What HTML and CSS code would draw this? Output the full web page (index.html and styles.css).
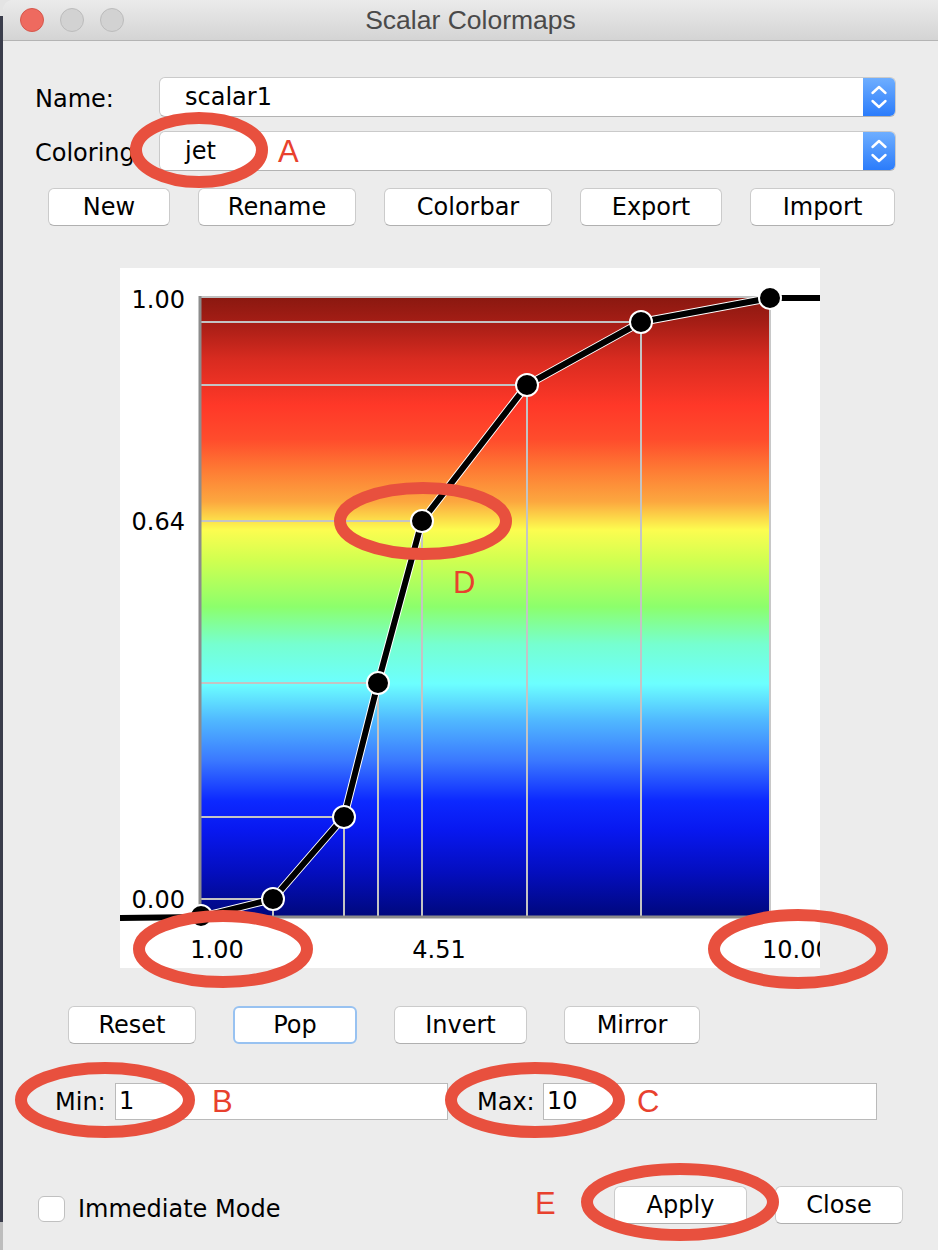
FILE: index.html
```html
<!DOCTYPE html>
<html>
<head>
<meta charset="utf-8">
<title>Scalar Colormaps</title>
<link rel="stylesheet" href="styles.css">
</head>
<body>
<div class="screen">
  <div class="edge"></div>
  <div class="window">
    <div class="titlebar">
      <div class="lights">
        <span class="light red"></span>
        <span class="light"></span>
        <span class="light"></span>
      </div>
      <div class="title">Scalar Colormaps</div>
      <div></div>
    </div>
    <div class="content">
      <div class="form-row">
        <span class="label">Name:</span>
        <div class="combo">
          <span class="combo-text">scalar1</span>
          <span class="combo-arrow">
            <svg width="32" height="38" viewBox="0 0 32 38"><path d="M9.5 15 L16 9 L22.5 15 M9.5 23 L16 29 L22.5 23" fill="none" stroke="#fff" stroke-width="2.4" stroke-linecap="round" stroke-linejoin="round"/></svg>
          </span>
        </div>
      </div>
      <div class="form-row">
        <span class="label">Coloring:</span>
        <div class="combo">
          <span class="combo-text">jet</span>
          <span class="combo-arrow">
            <svg width="32" height="38" viewBox="0 0 32 38"><path d="M9.5 15 L16 9 L22.5 15 M9.5 23 L16 29 L22.5 23" fill="none" stroke="#fff" stroke-width="2.4" stroke-linecap="round" stroke-linejoin="round"/></svg>
          </span>
        </div>
      </div>
      <div class="btn-row top-btns">
        <button class="btn w-new">New</button>
        <button class="btn w-rename">Rename</button>
        <button class="btn w-colorbar">Colorbar</button>
        <button class="btn w-export">Export</button>
        <button class="btn w-import">Import</button>
      </div>
      <div class="chart-panel">
        <svg width="700" height="700" viewBox="0 0 700 700">
          <defs>
            <linearGradient id="jet" x1="0" y1="0" x2="0" y2="1">
              <stop offset="0" stop-color="#8a1810"/>
              <stop offset="0.04" stop-color="#a41d15"/>
              <stop offset="0.10" stop-color="#d82b20"/>
              <stop offset="0.175" stop-color="#ff3828"/>
              <stop offset="0.23" stop-color="#ff4c2c"/>
              <stop offset="0.28" stop-color="#fe7c34"/>
              <stop offset="0.33" stop-color="#fca73f"/>
              <stop offset="0.376" stop-color="#fcfd50"/>
              <stop offset="0.425" stop-color="#d0ff50"/>
              <stop offset="0.50" stop-color="#8cff6c"/>
              <stop offset="0.56" stop-color="#76ffd0"/>
              <stop offset="0.624" stop-color="#6cffff"/>
              <stop offset="0.683" stop-color="#50b8ff"/>
              <stop offset="0.748" stop-color="#3a78ff"/>
              <stop offset="0.813" stop-color="#0c28ff"/>
              <stop offset="0.86" stop-color="#0818f0"/>
              <stop offset="0.926" stop-color="#040ec0"/>
              <stop offset="1" stop-color="#00087c"/>
            </linearGradient>
          </defs>
          <rect x="80" y="29" width="570" height="620" fill="url(#jet)"/>
          <g stroke="#c4c4c4" stroke-width="2">
            <line x1="80" y1="631" x2="153" y2="631"/>
            <line x1="80" y1="549" x2="224" y2="549"/>
            <line x1="80" y1="415" x2="258" y2="415"/>
            <line x1="80" y1="253" x2="302" y2="253"/>
            <line x1="80" y1="117" x2="407" y2="117"/>
            <line x1="80" y1="54" x2="521" y2="54"/>
            <line x1="153" y1="631" x2="153" y2="648"/>
            <line x1="224" y1="549" x2="224" y2="648"/>
            <line x1="258" y1="415" x2="258" y2="648"/>
            <line x1="302" y1="253" x2="302" y2="648"/>
            <line x1="407" y1="117" x2="407" y2="648"/>
            <line x1="521" y1="54" x2="521" y2="648"/>
          </g>
          <line x1="80" y1="29" x2="650" y2="29" stroke="#c0c0c0" stroke-width="2"/>
          <line x1="650" y1="29" x2="650" y2="650" stroke="#c8c8c8" stroke-width="2"/>
          <line x1="80" y1="28" x2="80" y2="650" stroke="#8c8c8c" stroke-width="3"/>
          <line x1="80" y1="649" x2="651" y2="649" stroke="#8c8c8c" stroke-width="3"/>
          <polyline points="81,649 153,631 224,549 258,415 302,253 407,117 521,54 650,30" fill="none" stroke="#fff" stroke-width="8" stroke-linejoin="round"/>
          <polyline points="0,650 81,649 153,631 224,549 258,415 302,253 407,117 521,54 650,30 700,30" fill="none" stroke="#000" stroke-width="6" stroke-linejoin="round"/>
          <g fill="#000" stroke="#fff" stroke-width="2">
            <circle cx="81" cy="648" r="11"/>
            <circle cx="153" cy="631" r="11"/>
            <circle cx="224" cy="549" r="11"/>
            <circle cx="258" cy="415" r="11"/>
            <circle cx="302" cy="253" r="11"/>
            <circle cx="407" cy="117" r="11"/>
            <circle cx="521" cy="54" r="11"/>
            <circle cx="650" cy="30" r="11"/>
          </g>
          <g class="axis-label">
            <text x="65" y="40" text-anchor="end">1.00</text>
            <text x="65" y="262" text-anchor="end">0.64</text>
            <text x="65" y="640" text-anchor="end">0.00</text>
            <text x="97" y="690" text-anchor="middle">1.00</text>
            <text x="319" y="690" text-anchor="middle">4.51</text>
            <text x="642" y="690">10.00</text>
          </g>
        </svg>
      </div>
      <div class="btn-row mid-btns">
        <button class="btn w-reset">Reset</button>
        <button class="btn btn-focus w-pop">Pop</button>
        <button class="btn w-invert">Invert</button>
        <button class="btn w-mirror">Mirror</button>
      </div>
      <div class="range-row">
        <span class="range-label min-label">Min:</span>
        <div class="field">1</div>
        <span class="range-label max-label">Max:</span>
        <div class="field field-max">10</div>
      </div>
      <div class="bottom-row">
        <span class="checkbox"></span>
        <span class="check-text">Immediate Mode</span>
        <button class="btn w-apply">Apply</button>
        <button class="btn w-close">Close</button>
      </div>
    </div>
  </div>
  <svg class="annotations" width="938" height="1250" viewBox="0 0 938 1250">
    <g fill="none" stroke="#e8503e" stroke-width="12">
      <ellipse cx="199" cy="150" rx="63" ry="32"/>
      <ellipse cx="423" cy="521" rx="83" ry="33"/>
      <ellipse cx="223" cy="949" rx="84" ry="33"/>
      <ellipse cx="798" cy="949" rx="84" ry="34"/>
      <ellipse cx="105" cy="1100" rx="84" ry="32"/>
      <ellipse cx="535" cy="1100" rx="84" ry="32"/>
      <ellipse cx="680" cy="1202" rx="93" ry="33"/>
    </g>
    <g class="note-letter">
      <text x="278" y="162">A</text>
      <text x="212" y="1112">B</text>
      <text x="637" y="1112">C</text>
      <text x="453" y="593">D</text>
      <text x="535" y="1214">E</text>
    </g>
  </svg>
</div>
</body>
</html>
```
FILE: styles.css
```css
html, body {
  margin: 0;
  padding: 0;
}

body {
  width: 938px;
  height: 1250px;
  overflow: hidden;
  background: #ececec;
  font-family: "DejaVu Sans", "Noto Sans", sans-serif;
  color: #000;
}

.screen {
  position: relative;
  display: flex;
  width: 938px;
  height: 1250px;
  background: #e4e4e4;
}

.edge {
  width: 3px;
  flex: none;
  background: linear-gradient(#e4e4e4 0, #e4e4e4 16px, #3a3d4b 16px, #3a3d4b 1222px, #bdbdbd 1222px);
}

.window {
  flex: 1;
  display: flex;
  flex-direction: column;
  background: #ececec;
  border-top-left-radius: 10px;
}

.titlebar {
  height: 40px;
  flex: none;
  display: grid;
  grid-template-columns: 1fr auto 1fr;
  align-items: center;
  background: linear-gradient(#ebebeb, #d4d4d4);
  border-bottom: 1px solid #b4b4b4;
  border-top-left-radius: 10px;
}

.lights {
  display: flex;
  gap: 16px;
  padding-left: 17px;
}

.light {
  width: 24px;
  height: 24px;
  box-sizing: border-box;
  border-radius: 50%;
  background: #d2d2d2;
  border: 1px solid #bcbcbc;
}

.light.red {
  background: #ee6a5f;
  border-color: #d6574c;
}

.title {
  font-family: "Liberation Sans", Arial, sans-serif;
  font-size: 26.5px;
  color: #4a4a4a;
}

.content {
  display: flex;
  flex-direction: column;
  padding: 36px 0 0 32px;
}

.form-row {
  display: flex;
  align-items: center;
  height: 40px;
}

.form-row + .form-row {
  margin-top: 14px;
}

.label {
  width: 124px;
  font-size: 24px;
  padding-top: 3px;
}

.combo {
  width: 737px;
  height: 40px;
  box-sizing: border-box;
  display: flex;
  background: #fff;
  border: 1px solid #cacaca;
  border-bottom-color: #b3b3b3;
  border-radius: 6px;
  overflow: hidden;
}

.combo-text {
  flex: 1;
  padding-left: 25px;
  font-size: 24px;
  line-height: 38px;
}

.combo-arrow {
  width: 32px;
  display: flex;
  align-items: center;
  justify-content: center;
  background: linear-gradient(#6eaeff, #2b7cfb);
}

.btn-row {
  display: flex;
}

.btn {
  height: 38px;
  box-sizing: border-box;
  padding: 0;
  background: #fff;
  border: 1px solid #cbcbcb;
  border-bottom-color: #b0b0b0;
  border-radius: 6px;
  font-family: "DejaVu Sans", "Noto Sans", sans-serif;
  font-size: 24px;
  color: #000;
}

.btn-focus {
  border: 2px solid #98c2f1;
}

.top-btns {
  margin-top: 17px;
  margin-left: 13px;
  gap: 28px;
}

.w-new { width: 122px; }
.w-rename { width: 158px; }
.w-colorbar { width: 168px; }
.w-export { width: 142px; }
.w-import { width: 145px; }

.chart-panel {
  margin-top: 42px;
  margin-left: 85px;
  width: 700px;
  height: 700px;
  background: #fff;
}

.chart-panel svg {
  display: block;
}

.axis-label text {
  font-family: "DejaVu Sans", sans-serif;
  font-size: 24px;
  fill: #000;
}

.mid-btns {
  margin-top: 38px;
  margin-left: 33px;
  gap: 37px;
}

.w-reset { width: 128px; }
.w-pop { width: 124px; }
.w-invert { width: 133px; }
.w-mirror { width: 136px; }

.range-row {
  display: flex;
  align-items: center;
  height: 37px;
  margin-top: 39px;
  margin-left: 20px;
}

.range-label {
  font-size: 24px;
}

.min-label {
  width: 60px;
}

.max-label {
  width: 66px;
  margin-left: 29px;
}

.field {
  width: 333px;
  height: 37px;
  box-sizing: border-box;
  background: #fff;
  border: 1px solid #bababa;
  font-size: 24px;
  line-height: 35px;
  padding-left: 3px;
}

.field-max {
  width: 334px;
}

.bottom-row {
  display: flex;
  align-items: center;
  height: 38px;
  margin-top: 66px;
  padding-right: 35px;
}

.checkbox {
  width: 27px;
  height: 26px;
  box-sizing: border-box;
  margin-left: 3px;
  margin-top: 8px;
  background: #fff;
  border: 1px solid #c0c0c0;
  border-radius: 6px;
}

.check-text {
  margin-left: 13px;
  margin-top: 8px;
  font-size: 24px;
}

.w-apply {
  width: 133px;
  margin-left: auto;
}

.w-close {
  width: 128px;
  margin-left: 28px;
}

.annotations {
  position: absolute;
  left: 0;
  top: 0;
  pointer-events: none;
}

.note-letter text {
  font-family: "Liberation Sans", Arial, sans-serif;
  font-size: 31px;
  fill: #e8412e;
}
```
